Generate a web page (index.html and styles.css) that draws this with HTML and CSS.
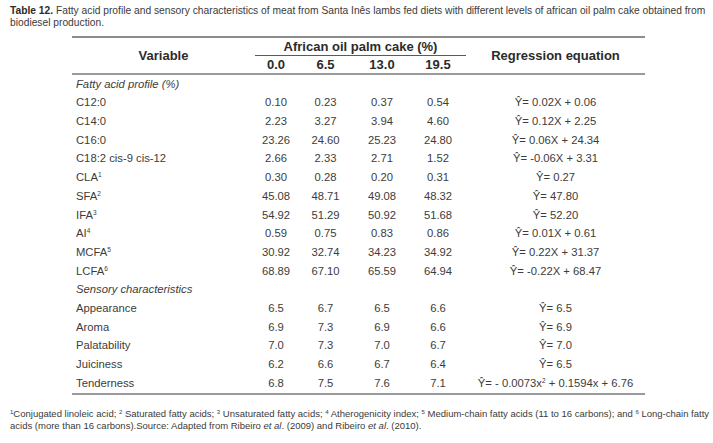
FILE: index.html
```html
<!DOCTYPE html>
<html lang="en">
<head>
<meta charset="utf-8">
<title>Table 12</title>
<link rel="stylesheet" href="styles.css">
</head>
<body>
<p class="caption"><b>Table 12.</b> Fatty acid profile and sensory characteristics of meat from Santa Inês lambs fed diets with different levels of african oil palm cake obtained from biodiesel production.</p>
<table class="data">
  <colgroup>
    <col class="c-var"><col class="c-a"><col class="c-b"><col class="c-c"><col class="c-d"><col class="c-eq">
  </colgroup>
  <thead>
    <tr class="h1">
      <th rowspan="2" class="top bottom">Variable</th>
      <th colspan="4" class="top span">African oil palm cake (%)</th>
      <th rowspan="2" class="top bottom">Regression equation</th>
    </tr>
    <tr class="h2">
      <th class="bottom">0.0</th>
      <th class="bottom">6.5</th>
      <th class="bottom">13.0</th>
      <th class="bottom">19.5</th>
    </tr>
  </thead>
  <tbody>
    <tr><td class="sec" colspan="6">Fatty acid profile (%)</td></tr>
    <tr><td>C12:0</td><td>0.10</td><td>0.23</td><td>0.37</td><td>0.54</td><td>Ŷ= 0.02X + 0.06</td></tr>
    <tr><td>C14:0</td><td>2.23</td><td>3.27</td><td>3.94</td><td>4.60</td><td>Ŷ= 0.12X + 2.25</td></tr>
    <tr><td>C16:0</td><td>23.26</td><td>24.60</td><td>25.23</td><td>24.80</td><td>Ŷ= 0.06X + 24.34</td></tr>
    <tr><td>C18:2 cis-9 cis-12</td><td>2.66</td><td>2.33</td><td>2.71</td><td>1.52</td><td>Ŷ= -0.06X + 3.31</td></tr>
    <tr><td>CLA<sup>1</sup></td><td>0.30</td><td>0.28</td><td>0.20</td><td>0.31</td><td>Ŷ= 0.27</td></tr>
    <tr><td>SFA<sup>2</sup></td><td>45.08</td><td>48.71</td><td>49.08</td><td>48.32</td><td>Ŷ= 47.80</td></tr>
    <tr><td>IFA<sup>3</sup></td><td>54.92</td><td>51.29</td><td>50.92</td><td>51.68</td><td>Ŷ= 52.20</td></tr>
    <tr><td>AI<sup>4</sup></td><td>0.59</td><td>0.75</td><td>0.83</td><td>0.86</td><td>Ŷ= 0.01X + 0.61</td></tr>
    <tr><td>MCFA<sup>5</sup></td><td>30.92</td><td>32.74</td><td>34.23</td><td>34.92</td><td>Ŷ= 0.22X + 31.37</td></tr>
    <tr><td>LCFA<sup>6</sup></td><td>68.89</td><td>67.10</td><td>65.59</td><td>64.94</td><td>Ŷ= -0.22X + 68.47</td></tr>
    <tr><td class="sec" colspan="6">Sensory characteristics</td></tr>
    <tr><td>Appearance</td><td>6.5</td><td>6.7</td><td>6.5</td><td>6.6</td><td>Ŷ= 6.5</td></tr>
    <tr><td>Aroma</td><td>6.9</td><td>7.3</td><td>6.9</td><td>6.6</td><td>Ŷ= 6.9</td></tr>
    <tr><td>Palatability</td><td>7.0</td><td>7.3</td><td>7.0</td><td>6.7</td><td>Ŷ= 7.0</td></tr>
    <tr><td>Juiciness</td><td>6.2</td><td>6.6</td><td>6.7</td><td>6.4</td><td>Ŷ= 6.5</td></tr>
    <tr class="last"><td>Tenderness</td><td>6.8</td><td>7.5</td><td>7.6</td><td>7.1</td><td>Ŷ= - 0.0073x<sup>2</sup> + 0.1594x + 6.76</td></tr>
  </tbody>
</table>
<p class="notes"><sup>1</sup>Conjugated linoleic acid; <sup>2</sup> Saturated fatty acids; <sup>3</sup> Unsaturated fatty acids; <sup>4</sup> Atherogenicity index; <sup>5</sup> Medium-chain fatty acids (11 to 16 carbons); and <sup>6</sup> Long-chain fatty acids (more than 16 carbons).Source: Adapted from Ribeiro <i>et al</i>. (2009) and Ribeiro <i>et al</i>. (2010).</p>
</body>
</html>
```
FILE: styles.css
```css
html, body {
  margin: 0;
  padding: 0;
  background: #ffffff;
}

body {
  font-family: "Liberation Sans", Arial, sans-serif;
  color: #3c3c3c;
}

.caption {
  margin: 0 0 0 10px;
  padding-top: 5px;
  width: 700px;
  font-size: 10.25px;
  line-height: 12.3px;
  color: #3a3a3a;
}

.caption b {
  color: #2a2a2a;
}

.data {
  margin: 6px 0 0 72px;
  width: 573px;
  table-layout: fixed;
  border-collapse: separate;
  border-spacing: 0;
}

.c-var { width: 183px; }
.c-a { width: 42px; }
.c-b { width: 57px; }
.c-c { width: 56px; }
.c-d { width: 56px; }
.c-eq { width: 179px; }

.data th {
  padding: 0;
  font-size: 13px;
  font-weight: bold;
  color: #2b2b2b;
  text-align: center;
  vertical-align: middle;
}

.data th.top {
  border-top: 2px solid #8c8c8c;
}

.data th.bottom {
  border-bottom: 2px solid #9a9a9a;
}

.data th.span {
  border-bottom: 1px solid #5a5a5a;
}

.h1 th {
  height: 17px;
}

.h2 th {
  height: 16px;
  padding-top: 1px;
}

.data td {
  padding: 0;
  height: 18.7px;
  font-size: 11.25px;
  line-height: 18.7px;
  text-align: center;
  white-space: nowrap;
  color: #3c3c3c;
}

.data td:first-child {
  text-align: left;
  padding-left: 4px;
}

.data td.sec {
  font-style: italic;
  text-align: left;
}

.data tr.last td {
  border-bottom: 2px solid #9a9a9a;
}

.data sup {
  font-size: 6.5px;
  line-height: 0;
  vertical-align: 4px;
}

.notes {
  margin: 13px 0 0 10px;
  width: 700px;
  font-size: 9.5px;
  line-height: 12.3px;
  color: #3a3a3a;
}

.notes sup {
  font-size: 6px;
  line-height: 1;
  vertical-align: 3px;
}
```
